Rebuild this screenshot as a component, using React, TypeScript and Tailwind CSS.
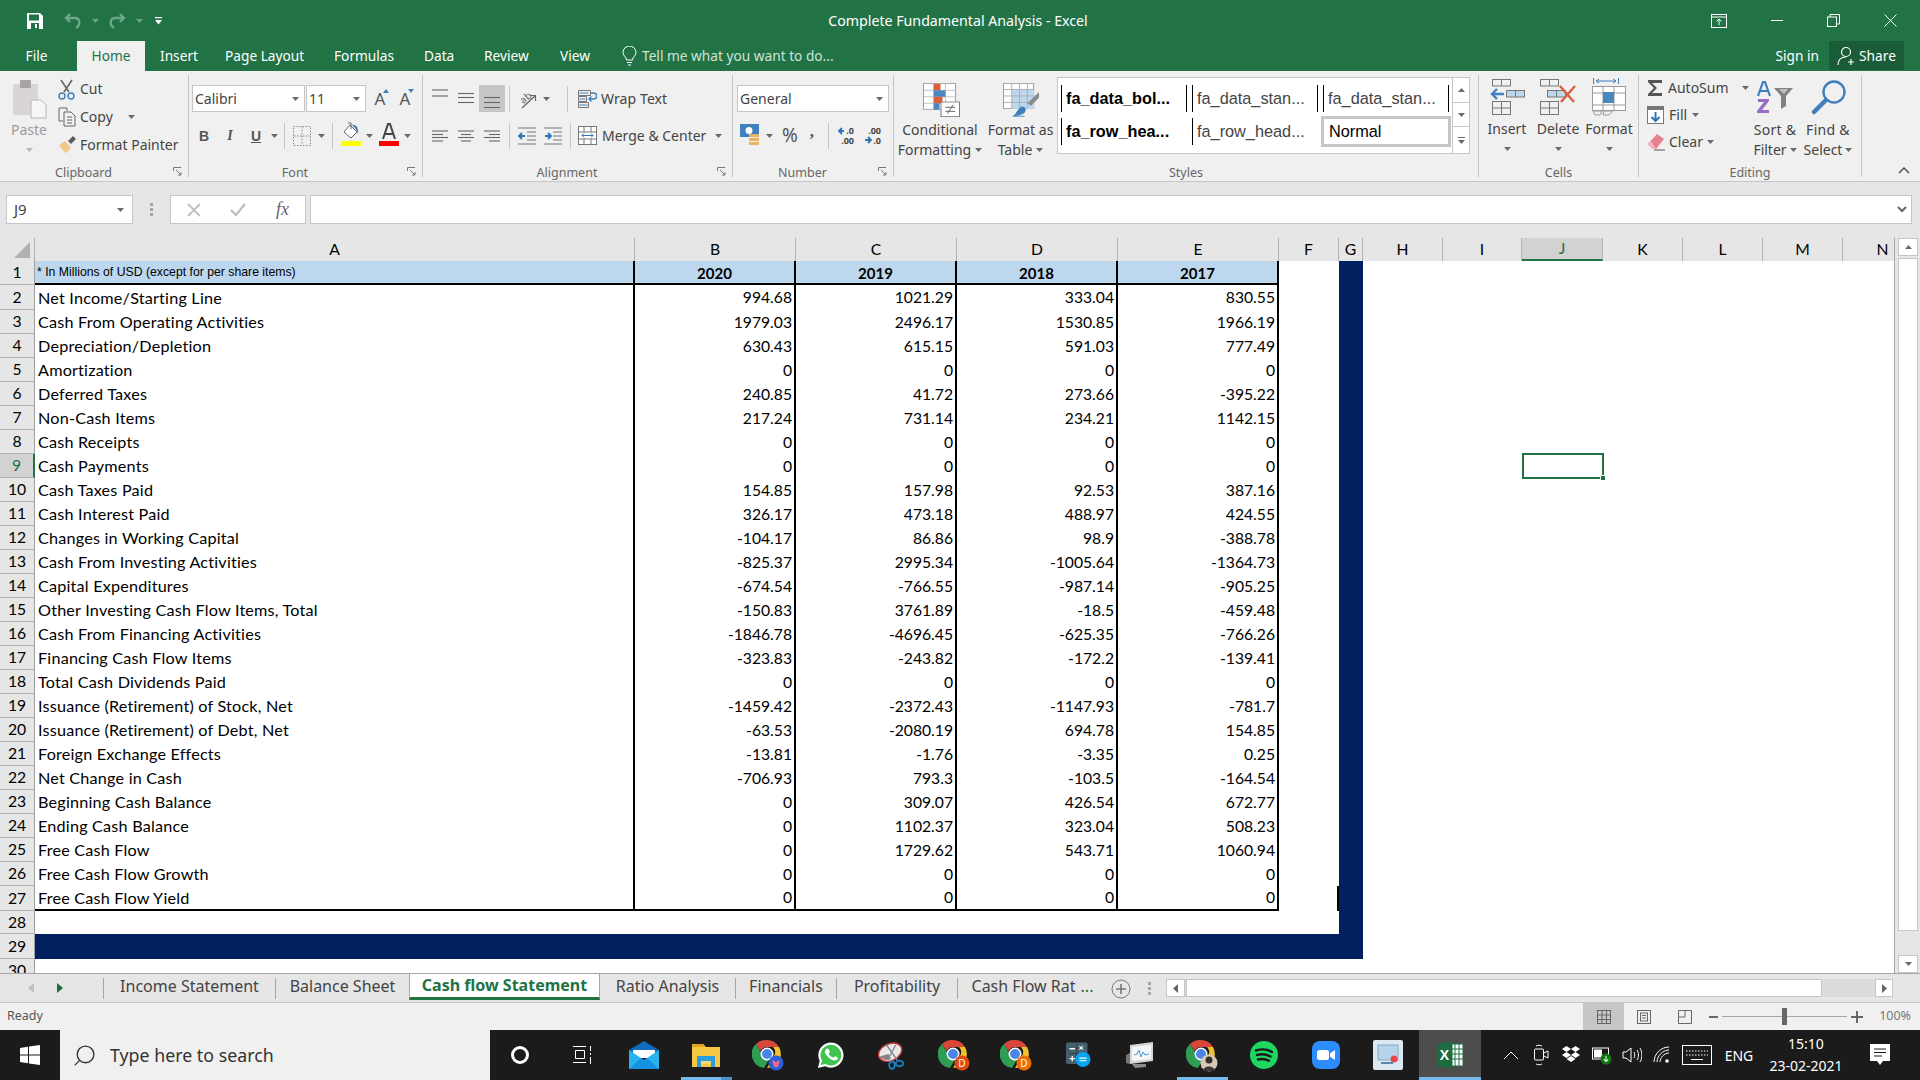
import type { ReactNode } from "react"
import { Search } from "lucide-react"

const ROWS: string[][] = [
  ["Net Income/Starting Line", "994.68", "1021.29", "333.04", "830.55"],
  ["Cash From Operating Activities", "1979.03", "2496.17", "1530.85", "1966.19"],
  ["Depreciation/Depletion", "630.43", "615.15", "591.03", "777.49"],
  ["Amortization", "0", "0", "0", "0"],
  ["Deferred Taxes", "240.85", "41.72", "273.66", "-395.22"],
  ["Non-Cash Items", "217.24", "731.14", "234.21", "1142.15"],
  ["Cash Receipts", "0", "0", "0", "0"],
  ["Cash Payments", "0", "0", "0", "0"],
  ["Cash Taxes Paid", "154.85", "157.98", "92.53", "387.16"],
  ["Cash Interest Paid", "326.17", "473.18", "488.97", "424.55"],
  ["Changes in Working Capital", "-104.17", "86.86", "98.9", "-388.78"],
  ["Cash From Investing Activities", "-825.37", "2995.34", "-1005.64", "-1364.73"],
  ["Capital Expenditures", "-674.54", "-766.55", "-987.14", "-905.25"],
  ["Other Investing Cash Flow Items, Total", "-150.83", "3761.89", "-18.5", "-459.48"],
  ["Cash From Financing Activities", "-1846.78", "-4696.45", "-625.35", "-766.26"],
  ["Financing Cash Flow Items", "-323.83", "-243.82", "-172.2", "-139.41"],
  ["Total Cash Dividends Paid", "0", "0", "0", "0"],
  ["Issuance (Retirement) of Stock, Net", "-1459.42", "-2372.43", "-1147.93", "-781.7"],
  ["Issuance (Retirement) of Debt, Net", "-63.53", "-2080.19", "694.78", "154.85"],
  ["Foreign Exchange Effects", "-13.81", "-1.76", "-3.35", "0.25"],
  ["Net Change in Cash", "-706.93", "793.3", "-103.5", "-164.54"],
  ["Beginning Cash Balance", "0", "309.07", "426.54", "672.77"],
  ["Ending Cash Balance", "0", "1102.37", "323.04", "508.23"],
  ["Free Cash Flow", "0", "1729.62", "543.71", "1060.94"],
  ["Free Cash Flow Growth", "0", "0", "0", "0"],
  ["Free Cash Flow Yield", "0", "0", "0", "0"],
]

const COLUMNS = ["A", "B", "C", "D", "E", "F", "G", "H", "I", "J", "K", "L", "M", "N"]
const GRID = "grid grid-cols-[35px_600px_161px_161px_161px_161px_60px_24px_80px_79px_81px_80px_80px_80px_80px]"

function Caret({ className = "" }: { className?: string }) {
  return (
    <svg width="7" height="4" viewBox="0 0 7 4" className={className}>
      <path d="M0 0h7L3.5 4z" fill="#6a6a6a" />
    </svg>
  )
}

function Launcher() {
  return (
    <svg width="9" height="9" viewBox="0 0 9 9" fill="none" stroke="#777">
      <path d="M.5 4V.5H8M3 3l5 5M8 5v3H5" />
    </svg>
  )
}

function Group({ label, launcher, className, children }: { label: string; launcher?: boolean; className: string; children: ReactNode }) {
  return (
    <div className={`relative flex flex-col border-r border-[#c6c6c6] ${className}`}>
      <div className="flex-1 min-h-0">{children}</div>
      <div className={`h-[14px] flex items-center justify-center translate-y-[3px] text-[12.5px] leading-none text-[#666] ${launcher ? "pr-[21px]" : ""}`}>{label}</div>
      {launcher && (
        <span className="absolute right-[6px] bottom-[1px] flex">
          <Launcher />
        </span>
      )}
    </div>
  )
}

function Sep({ className = "" }: { className?: string }) {
  return <span className={`w-px h-[26px] bg-[#c6c6c6] ${className}`} />
}

function Lines({ ys, align }: { ys: number[]; align: "l" | "c" | "r" }) {
  return (
    <svg width="18" height="20" viewBox="0 0 18 20" stroke="#666" strokeWidth="1.1">
      {ys.map((y, i) => {
        const short = i % 2 === 1 && ys.length === 4
        const x1 = short && align === "c" ? 4 : short && align === "r" ? 6 : 1
        const x2 = short && align === "c" ? 14 : short && align === "l" ? 12 : 17
        return <line key={y} x1={x1} x2={x2} y1={y} y2={y} />
      })}
    </svg>
  )
}

function ClipboardIcon() {
  return (
    <svg width="35" height="40" viewBox="0 0 35 40">
      <rect x="1" y="5" width="25" height="31" rx="1.5" fill="#d9d5d6" />
      <rect x="8" y="1" width="11" height="8" rx="1" fill="#a8a4a5" />
      <path d="M19 21h10l5 5v13H19z" fill="#f7f5f6" stroke="#bbb6b8" />
    </svg>
  )
}

function Scissors() {
  return (
    <svg width="17" height="21" viewBox="0 0 17 21" fill="none">
      <path d="M3 1l8 12M14 1L6 13" stroke="#666" strokeWidth="1.6" />
      <circle cx="4" cy="17" r="3" stroke="#3f80bd" strokeWidth="1.4" />
      <circle cx="13" cy="17" r="3" stroke="#3f80bd" strokeWidth="1.4" />
    </svg>
  )
}

function CopyIcon() {
  return (
    <svg width="18" height="20" viewBox="0 0 18 20" fill="none" stroke="#666">
      <path d="M1 1h8v3M1 1v13h4" />
      <path d="M6 5h7l4 4v10H6zM9 10h5M9 13h5M9 16h5" />
    </svg>
  )
}

function PainterIcon() {
  return (
    <svg width="18" height="18" viewBox="0 0 18 18">
      <path d="M1 9l6-4 6 7-5 5c-2-1-5-5-7-8z" fill="#f0c78c" />
      <path d="M10 5l5-5 3 3-5 5z" fill="#5d5d5d" />
    </svg>
  )
}

function BorderIcon() {
  return (
    <svg width="18" height="20" viewBox="0 0 18 20" fill="none" stroke="#888" strokeDasharray="1.5 1.5">
      <rect x=".5" y=".5" width="17" height="19" />
      <path d="M9 1v18M1 10h16" />
    </svg>
  )
}

function FillIcon() {
  return (
    <svg width="20" height="24" viewBox="0 0 20 24">
      <path d="M9 3l7 7-6 6-7-6z" fill="#fff" stroke="#666" />
      <path d="M7 1h3v6" stroke="#666" fill="none" />
      <path d="M11 3c4-1 7 3 6 9-1-4-3-6-6-9z" fill="#3f80bd" />
      <rect y="19" width="20" height="5" fill="#ffff00" />
    </svg>
  )
}

function FontColorIcon() {
  return (
    <svg width="20" height="24" viewBox="0 0 20 24">
      <path d="M4 17L9 2h2l5 15M6 12h8" fill="none" stroke="#444" strokeWidth="2" />
      <rect y="19" width="20" height="5" fill="#ff0000" />
    </svg>
  )
}

function SizeA({ up }: { up?: boolean }) {
  return (
    <span className="relative w-[12px] text-center text-[17px] text-[#555]">
      A
      <svg width="6" height="4" viewBox="0 0 6 4" className={`absolute -right-[3px] -top-[1px] ${up ? "" : "rotate-180"}`}>
        <path d="M0 4h6L3 0z" fill="#3f80bd" />
      </svg>
    </span>
  )
}

function OrientationIcon() {
  return (
    <svg width="22" height="20" viewBox="0 0 22 20" fill="none" stroke="#666" className="ml-[8px]">
      <text x="2" y="12" fontSize="10" fill="#666" stroke="none" fontFamily="Noto Sans" transform="rotate(-40 8 9)">ab</text>
      <path d="M4 19L17 7M12 6.500h5.500V12" strokeWidth="1.200" />
    </svg>
  )
}

function WrapIcon() {
  return (
    <svg width="19" height="18" viewBox="0 0 19 18" fill="none">
      <path d="M.5.5h12v5H.5zM.5 6.500h8v5h-8zM.5 12.500h10v5H.5z" stroke="#777" />
      <path d="M1.500 3h9M1.500 9h6M1.500 15h8" stroke="#3f80bd" />
      <path d="M13 3h3c3.500 0 3.500 6 0 6h-5m2.500-2.500L11 9l2.500 2.500" stroke="#3f80bd" strokeWidth="1.400" />
    </svg>
  )
}

function MergeIcon() {
  return (
    <svg width="19" height="19" viewBox="0 0 19 19" fill="none" stroke="#777">
      <rect x=".5" y=".5" width="18" height="18" fill="#fff" />
      <path d="M1 6h17M1 13h17M6 1v5M13 1v5M6 13v5M13 13v5" />
      <path d="M4 9.500h11M6 7.500l-2 2 2 2M13 7.500l2 2-2 2" stroke="#2f75b5" />
    </svg>
  )
}

function DecimalIcon({ more }: { more?: boolean }) {
  return (
    <svg width="18" height="20" viewBox="0 0 18 20" className="font-['Noto_Sans']">
      {more ? (
        <>
          <text x="17" y="8" textAnchor="end" fontSize="9" fontWeight="700" fill="#444">.00</text>
          <path d="M1 14h5M4 11l3 3-3 3" fill="none" stroke="#2f75b5" strokeWidth="1.800" />
          <text x="17" y="18" textAnchor="end" fontSize="9" fontWeight="700" fill="#444">.0</text>
        </>
      ) : (
        <>
          <path d="M7 5H2M5 2L2 5l3 3" fill="none" stroke="#2f75b5" strokeWidth="1.800" />
          <text x="17" y="8" textAnchor="end" fontSize="9" fontWeight="700" fill="#444">.0</text>
          <text x="17" y="18" textAnchor="end" fontSize="9" fontWeight="700" fill="#444">.00</text>
        </>
      )}
    </svg>
  )
}

function CondFormat() {
  return (
    <svg width="37" height="34" viewBox="0 0 38 42" preserveAspectRatio="none" className="ml-[3px]">
      <rect x=".5" y=".5" width="33" height="32" fill="#fff" stroke="#999" />
      <path d="M11 1v32M23 1v32M1 9h33M1 17h33M1 25h33" stroke="#bbb" />
      <rect x="11" y="1" width="7" height="8" fill="#d9603b" />
      <rect x="11" y="9" width="12" height="8" fill="#4a86c0" />
      <rect x="11" y="17" width="9" height="8" fill="#d9603b" />
      <rect x="11" y="25" width="6" height="8" fill="#4a86c0" />
      <rect x="18.500" y="23.500" width="19" height="18" fill="#fff" stroke="#777" />
      <path d="M23 30h10M23 35h10M31 27l-6 11" stroke="#555" fill="none" />
    </svg>
  )
}

function TableIcon() {
  return (
    <svg width="37" height="34" viewBox="0 0 38 42" preserveAspectRatio="none" className="ml-[2px]">
      <rect x=".5" y=".5" width="31" height="31" fill="#fff" stroke="#999" />
      <rect x="9" y="8" width="23" height="24" fill="#bdd7ee" />
      <path d="M9 1v31M17 1v31M25 1v31M1 8h31M1 16h31M1 24h31" stroke="#aaa" />
      <path d="M37 11l-12 14 4 3 8-10z" fill="#8a8a8a" />
      <path d="M10 41c3-1 4-8 9-12 4 0 5 3 4 6-1 4-8 6-13 6z" fill="#3f80bd" />
      <path d="M10 41h12" stroke="#3f80bd" />
    </svg>
  )
}

function InsertIcon() {
  return (
    <svg width="36" height="36" viewBox="0 0 36 36" fill="none" stroke="#777">
      <rect x="3.500" y=".5" width="18" height="6.500" />
      <path d="M12.500 1v6" />
      <rect x="17.500" y="11.500" width="18" height="6.500" fill="#bdd7ee" />
      <path d="M26.500 12v6" />
      <rect x="3.500" y="22.500" width="18" height="13" />
      <path d="M12.500 23v12M4 29h17" />
      <path d="M15 15H3m5-5l-5 5 5 5" stroke="#3f80bd" strokeWidth="2.400" />
    </svg>
  )
}

function DeleteIcon() {
  return (
    <svg width="36" height="36" viewBox="0 0 36 36" fill="none" stroke="#777">
      <rect x=".5" y=".5" width="18" height="6.500" />
      <path d="M9.500 1v6" />
      <rect x="7.500" y="11.500" width="18" height="6.500" fill="#bdd7ee" />
      <path d="M16.500 12v6" />
      <rect x=".5" y="22.500" width="18" height="13" />
      <path d="M9.500 23v12M1 29h17" />
      <path d="M20 7l14 16M35 7L21 23" stroke="#d9603b" strokeWidth="2.400" />
    </svg>
  )
}

function FormatIcon() {
  return (
    <svg width="34" height="38" viewBox="0 0 34 38" fill="none" stroke="#999">
      <path d="M1.500 0v6M26.500 0v6M4 3h20M7 1L4 3l3 2M21 1l3 2-3 2" stroke="#3f80bd" />
      <rect x=".5" y="8.500" width="33" height="24" fill="#fff" />
      <path d="M11 9v24M22 9v24M1 15h33M1 27h33" />
      <rect x="11" y="14" width="11" height="11" fill="#4a86c0" stroke="none" />
      <path d="M1 33h9l-2 4H3zM12 33h9l-4 4h-6z" />
    </svg>
  )
}

function SumIcon() {
  return (
    <svg width="16" height="16" viewBox="0 0 16 16">
      <path d="M1 0h14v3H5l5 5-5 5h10v3H1v-2l6-6-6-6z" fill="#555" />
    </svg>
  )
}

function FillDown() {
  return (
    <svg width="17" height="18" viewBox="0 0 17 18" fill="none">
      <rect x=".5" y=".5" width="16" height="17" fill="#fff" stroke="#777" />
      <rect x="1" y="1" width="15" height="3" fill="#777" />
      <path d="M8.500 6v9M4.500 11l4 4 4-4" stroke="#2f75b5" strokeWidth="2" />
    </svg>
  )
}

function Eraser() {
  return (
    <svg width="18" height="18" viewBox="0 0 18 18">
      <path d="M1 11L10 1l7 5-8 10H5z" fill="#e87f8e" />
      <path d="M1 11l4 5h4L4 8z" fill="#f3b4bd" />
      <path d="M7 17h11" stroke="#555" />
    </svg>
  )
}

function SortIcon() {
  return (
    <svg width="36" height="32" viewBox="0 0 36 32">
      <path d="M1 15L6 1h2l5 14M3 10h8" fill="none" stroke="#3f80bd" strokeWidth="2.200" />
      <path d="M1 18h11v2L5 29h7v3H0v-2l7-9H1z" fill="#9b6cc4" />
      <path d="M17 7h19l-7 8v10l-5 3V15z" fill="#808080" />
      <path d="M22 8h9l-4 5z" fill="#fff" opacity=".5" />
    </svg>
  )
}

function FindIcon() {
  return (
    <svg width="35" height="35" viewBox="0 0 35 35" fill="none" stroke="#3f80bd">
      <circle cx="23" cy="12" r="10.500" strokeWidth="2.400" />
      <path d="M14 21L3 32" strokeWidth="4.500" strokeLinecap="round" />
    </svg>
  )
}

function Chrome({ badge }: { badge?: ReactNode }) {
  return (
    <svg width="32" height="34" viewBox="0 0 32 34">
      <path d="M15 2a14 14 0 0 1 12 7H15a7 7 0 0 0-6.500 4L4 6a14 14 0 0 1 11-4z" fill="#d9473a" />
      <path d="M4 6l6.500 11a7 7 0 0 0 7 3.800L12 30A14 14 0 0 1 4 6z" fill="#2f9e54" />
      <path d="M27 9a14 14 0 0 1-12 21l7-12a7 7 0 0 0-1-9z" fill="#f3c12e" />
      <circle cx="15" cy="16" r="6.500" fill="#fff" />
      <circle cx="15" cy="16" r="5" fill="#4a86e8" />
      {badge}
    </svg>
  )
}

function DBadge({ fill }: { fill: string }) {
  return (
    <>
      <circle cx="24" cy="25" r="7.500" fill={fill} />
      <text x="24" y="29" textAnchor="middle" fontSize="10" fill="#fff">D</text>
    </>
  )
}

function SheetRow({ n, data }: { n: number; data?: string[] }) {
  const band = n === 29
  const selected = n === 9
  return (
    <>
      <div className={`flex items-center justify-center pt-px border-b border-[#b1b1b1] ${selected ? "bg-[#d2d2d2] text-[#217346] border-r-2 border-r-[#217346]" : "bg-[#e6e6e6] border-r border-r-[#9f9f9f]"}`}>{n}</div>
      {data
        ? data.map((value, i) => (
            <div key={i} className={`flex items-center pt-px border-r-2 border-r-black ${n === 27 ? "border-b-2 border-b-black" : ""} ${i === 0 ? "pl-[3px] text-[16.200px] tracking-[0.2px]" : "justify-end pr-[2px]"}`}>
              {value}
            </div>
          ))
        : COLUMNS.slice(0, 5).map((c) => <div key={c} className={band ? "bg-[#002060]" : ""} />)}
      <div className={`flex justify-end items-stretch ${band ? "bg-[#002060]" : ""}`}>
        {n === 27 && <span className="w-[2px] bg-black" />}
      </div>
      <div className={n <= 29 ? "bg-[#002060]" : ""} />
      {COLUMNS.slice(7).map((c) => (
        <div key={c} className="relative">
          {selected && c === "J" && (
            <span className="absolute -top-px -bottom-px left-0 -right-px border-2 border-[#217346]">
              <span className="absolute -right-[4px] -bottom-[4px] w-[6px] h-[6px] bg-[#217346] border border-white" />
            </span>
          )}
        </div>
      ))}
    </>
  )
}

function SheetTab({ name, className }: { name: ReactNode; className: string }) {
  return <div className={`flex items-center justify-center h-[21px] mt-[4px] pb-[6px] border-l border-[#a6a6a6] text-[16px] text-[#444] whitespace-nowrap ${className}`}>{name}</div>
}

function TaskSlot({ children, underline, active }: { children: ReactNode; underline?: boolean; active?: boolean }) {
  return (
    <div className={`relative w-[62px] flex items-center justify-center ${active ? "bg-[#4d4d4d]" : ""}`}>
      {children}
      {underline && <span className="absolute bottom-0 left-[6px] right-[5px] h-[3px] bg-[#76b9ed]" />}
      {active && <span className="absolute bottom-0 inset-x-0 h-[3px] bg-[#76b9ed]" />}
    </div>
  )
}

function Tray({ w, children }: { w: string; children: ReactNode }) {
  return <div className={`${w} flex items-center justify-center`}>{children}</div>
}

export default function App() {
  return (
    <div className="w-[1920px] h-[1080px] flex flex-col overflow-hidden font-['Noto_Sans',sans-serif] text-[14px] text-[#444] bg-[#f0f0f0]">
      {/* Title bar */}
      <div className="h-[41px] shrink-0 bg-[#217346] flex items-center text-white">
        <div className="w-[640px] flex items-center">
          <svg width="16" height="16" viewBox="0 0 16 16" className="ml-[27px]">
            <path d="M0 0h13l3 3v13H0z" fill="#fff" />
            <rect x="2" y="1.500" width="10" height="6" fill="#217346" />
            <rect x="4" y="10" width="8" height="6" fill="#217346" />
            <rect x="8" y="11" width="2" height="4" fill="#fff" />
          </svg>
          <svg width="20" height="18" viewBox="0 0 20 18" fill="none" stroke="#6fa588" strokeWidth="2.400" className="ml-[20px]">
            <path d="M7 2L3 6l4 4M3 6h9c5 0 6 7 1 10" />
          </svg>
          <svg width="7" height="4" className="ml-[9px]"><path d="M0 0h7L3.500 4z" fill="#6fa588" /></svg>
          <svg width="20" height="18" viewBox="0 0 20 18" fill="none" stroke="#6fa588" strokeWidth="2.400" className="ml-[8px]">
            <path d="M13 2l4 4-4 4M17 6H8c-5 0-6 7-1 10" />
          </svg>
          <svg width="7" height="4" className="ml-[9px]"><path d="M0 0h7L3.500 4z" fill="#6fa588" /></svg>
          <svg width="7" height="8" viewBox="0 0 7 8" className="ml-[12px]">
            <path d="M0 0h7v1.200H0zM0 3h7L3.500 7.500z" fill="#fff" />
          </svg>
        </div>
        <div className="w-[636px] text-center text-[14.200px]">Complete Fundamental Analysis - Excel</div>
        <div className="flex-1 flex items-center">
          <svg width="16" height="14" viewBox="0 0 16 14" fill="none" stroke="#fff" className="ml-[435px]">
            <rect x=".5" y=".5" width="15" height="13" />
            <path d="M1 3h14M8 11V5M5.500 7.500L8 5l2.500 2.500" />
          </svg>
          <svg width="12" height="2" className="ml-[44px]"><rect width="12" height="1" fill="#fff" /></svg>
          <svg width="13" height="13" viewBox="0 0 13 13" fill="none" stroke="#fff" className="ml-[44px]">
            <rect x=".5" y="3" width="9" height="9.500" />
            <path d="M3 3V.5h9.500V10H10" />
          </svg>
          <svg width="13" height="13" viewBox="0 0 13 13" stroke="#fff" className="ml-[44px]">
            <path d="M.5.5l12 12M12.500.5l-12 12" />
          </svg>
        </div>
      </div>

      {/* Ribbon tabs */}
      <div className="h-[30px] shrink-0 bg-[#217346] flex text-white text-[13.700px] leading-none whitespace-nowrap">
        <div className="w-[73px] flex items-center justify-center">File</div>
        <div className="w-[68px] ml-[4px] flex items-center justify-center bg-[#f0f0f0] text-[#217346]">Home</div>
        <div className="w-[36px] ml-[15px] flex items-center">Insert</div>
        <div className="w-[80px] ml-[29px] flex items-center">Page Layout</div>
        <div className="w-[60px] ml-[29px] flex items-center">Formulas</div>
        <div className="w-[30px] ml-[30px] flex items-center">Data</div>
        <div className="w-[47px] ml-[30px] flex items-center">Review</div>
        <div className="w-[32px] ml-[29px] flex items-center">View</div>
        <svg width="15" height="20" viewBox="0 0 15 20" fill="none" stroke="#fff" className="ml-[30px] self-center">
          <path d="M4.500 14c0-3-3.500-4-3.500-7.500a6.500 6.500 0 0 1 13 0C14 10 10.500 11 10.500 14zM5 16.500h5M6 19h3" />
        </svg>
        <div className="ml-[5px] flex items-center text-[#cfe3d7]">Tell me what you want to do...</div>
        <div className="ml-auto flex items-center">Sign in</div>
        <div className="ml-[10px] mr-[16px] w-[75px] h-[29px] bg-[#1a5c38] flex items-center justify-center gap-[2px]">
          <svg width="20" height="20" viewBox="0 0 20 20" fill="none" stroke="#fff" strokeWidth="1.200">
            <circle cx="9" cy="6" r="4.500" />
            <path d="M1 19c0-5 3-8 8-8M14 13v6M11 16h6" />
          </svg>
          Share
        </div>
      </div>

      {/* Ribbon */}
      <div className="h-[111px] shrink-0 flex pt-[4px] pb-[4px] border-b border-[#c6c6c6] leading-none">
        <Group label="Clipboard" launcher className="w-[189px]">
          <div className="flex">
            <div className="w-[58px] flex flex-col items-center text-[#9d9d9d]">
              <span className="mt-[4px] flex"><ClipboardIcon /></span>
              <span className="mt-[4px]">Paste</span>
              <Caret className="mt-[11px] opacity-40" />
            </div>
            <div className="flex flex-col">
              <div className="h-7 flex items-center gap-[5px]"><Scissors /><span>Cut</span></div>
              <div className="h-7 flex items-center gap-[4px]"><CopyIcon /><span>Copy</span><Caret className="ml-[11px]" /></div>
              <div className="h-7 flex items-center gap-[4px]"><PainterIcon /><span>Format Painter</span></div>
            </div>
          </div>
        </Group>

        <Group label="Font" launcher className="w-[234px]">
          <div className="flex items-center mt-[10px] h-[27px] ml-[3px]">
            <div className="w-[113px] h-full bg-white border border-[#c6c6c6] flex items-center justify-between pl-[2px] pr-[5px]">Calibri<Caret /></div>
            <div className="w-[60px] h-full ml-[1px] bg-white border border-[#c6c6c6] flex items-center justify-between pl-[2px] pr-[5px]">11<Caret /></div>
            <span className="ml-[8px] flex"><SizeA up /></span>
            <span className="ml-[13px] flex"><SizeA /></span>
          </div>
          <div className="flex items-center mt-[10px] h-[27px] ml-[2px]">
            <span className="w-[26px] text-center font-bold text-[#555] font-['Liberation_Sans']">B</span>
            <span className="w-[26px] text-center font-bold italic text-[#555] font-['Liberation_Serif']">I</span>
            <span className="w-[26px] text-center font-bold underline text-[#555] font-['Liberation_Sans']">U</span>
            <Caret className="ml-[2px]" />
            <Sep className="ml-[6px]" />
            <span className="ml-[8px] flex"><BorderIcon /></span>
            <Caret className="ml-[7px]" />
            <Sep className="ml-[7px]" />
            <span className="ml-[8px] -mt-[3px] flex"><FillIcon /></span>
            <Caret className="ml-[5px]" />
            <span className="ml-[6px] -mt-[3px] flex"><FontColorIcon /></span>
            <Caret className="ml-[5px]" />
          </div>
        </Group>

        <Group label="Alignment" launcher className="w-[310px]">
          <div className="flex items-center mt-[10px] h-[27px] ml-[4px]">
            <span className="w-[26px] flex justify-center"><Lines ys={[1, 7]} align="l" /></span>
            <span className="w-[26px] flex justify-center"><Lines ys={[4.5, 8.5, 13.5]} align="l" /></span>
            <span className="w-[26px] h-full bg-[#c6c6c6] flex items-center justify-center"><Lines ys={[8.5, 13.5, 18.5]} align="l" /></span>
            <Sep className="ml-[4px]" />
            <OrientationIcon />
            <Caret className="ml-[3px]" />
            <Sep className="ml-[17px]" />
            <span className="ml-[10px] flex"><WrapIcon /></span>
            <span className="ml-[4px] tracking-[0.1px]">Wrap Text</span>
          </div>
          <div className="flex items-center mt-[10px] h-[27px] ml-[4px]">
            <span className="w-[26px] flex justify-center"><Lines ys={[5, 8.5, 11.5, 15]} align="l" /></span>
            <span className="w-[26px] flex justify-center"><Lines ys={[5, 8.5, 11.5, 15]} align="c" /></span>
            <span className="w-[26px] flex justify-center"><Lines ys={[5, 8.5, 11.5, 15]} align="r" /></span>
            <Sep className="ml-[4px]" />
            <svg width="18" height="20" viewBox="0 0 18 20" fill="none" stroke="#777" className="ml-[8px]">
              <path d="M0 2h18M9 6h9M9 10h9M9 14h9M0 18h18" />
              <path d="M7 10H1m3-3l-3 3 3 3" stroke="#2f75b5" strokeWidth="1.800" />
            </svg>
            <svg width="18" height="20" viewBox="0 0 18 20" fill="none" stroke="#777" className="ml-[8px]">
              <path d="M0 2h18M9 6h9M9 10h9M9 14h9M0 18h18" />
              <path d="M1 10h6M4 7l3 3-3 3" stroke="#2f75b5" strokeWidth="1.800" />
            </svg>
            <Sep className="ml-[8px]" />
            <span className="ml-[7px] flex"><MergeIcon /></span>
            <span className="ml-[5px]">Merge &amp; Center</span>
            <Caret className="ml-[9px]" />
          </div>
        </Group>

        <Group label="Number" launcher className="w-[161px]">
          <div className="flex items-center mt-[10px] h-[27px] ml-[4px]">
            <div className="w-[152px] h-full bg-white border border-[#c6c6c6] flex items-center justify-between pl-[2px] pr-[5px]">General<Caret /></div>
          </div>
          <div className="flex items-center mt-[10px] h-[27px] ml-[7px]">
            <svg width="20" height="24" viewBox="0 0 20 24">
              <rect width="19" height="13" fill="#3f80bd" />
              <circle cx="9" cy="6.500" r="3.500" fill="#fff" />
              <rect x="9" y="10" width="10" height="3" fill="#e9b35f" />
              <rect x="9" y="14" width="10" height="3" fill="#e9b35f" />
              <rect x="9" y="18" width="10" height="3" fill="#e9b35f" />
            </svg>
            <Caret className="ml-[6px]" />
            <span className="ml-[9px] text-[19px] text-[#555]">%</span>
            <span className="ml-[12px] -mt-[8px] font-bold text-[#555] text-[17px] font-['Liberation_Serif']">,</span>
            <Sep className="ml-[14px]" />
            <span className="ml-[8px] flex"><DecimalIcon /></span>
            <span className="ml-[9px] flex"><DecimalIcon more /></span>
          </div>
        </Group>

        <Group label="Styles" className="w-[585px]">
          <div className="flex">
            <div className="w-[92px] flex flex-col items-center mt-[8px]">
              <CondFormat />
              <span className="mt-[6px]">Conditional</span>
              <span className="mt-[6px] flex items-center gap-[4px]">Formatting<Caret /></span>
            </div>
            <div className="w-[69px] flex flex-col items-center mt-[8px]">
              <TableIcon />
              <span className="mt-[6px]">Format as</span>
              <span className="mt-[6px] flex items-center gap-[4px]">Table<Caret /></span>
            </div>
            <div className="ml-[2px] mt-[2px] w-[413px] h-[77px] bg-white border border-[#c6c6c6] flex font-['Liberation_Sans'] text-black text-[16.300px] whitespace-nowrap">
              <div className="w-[394px] grid grid-cols-[131px_131px_132px] grid-rows-[27px_27px] gap-y-[6px] pt-[7px] pl-[3px]">
                <div className="flex items-center"><span className="h-[27px] w-[126px] flex items-center border-x border-black pl-[4px] font-bold">fa_data_bol...</span></div>
                <div className="flex items-center"><span className="h-[27px] w-[126px] flex items-center border-x border-black pl-[4px] text-[#444]">fa_data_stan...</span></div>
                <div className="flex items-center"><span className="h-[27px] w-[126px] flex items-center border-x border-black pl-[4px] text-[#444]">fa_data_stan...</span></div>
                <div className="flex items-center"><span className="h-[27px] w-[126px] flex items-center border-l border-black pl-[4px] font-bold">fa_row_hea...</span></div>
                <div className="flex items-center"><span className="h-[27px] w-[126px] flex items-center border-l border-black pl-[4px] text-[#444]">fa_row_head...</span></div>
                <div className="flex items-center -ml-[2px]"><span className="h-[31px] w-[130px] flex items-center border-[3px] border-[#c6c6c6] pl-[5px]">Normal</span></div>
              </div>
              <div className="w-[18px] ml-auto flex flex-col border-l border-[#c6c6c6]">
                <span className="h-[25px] flex items-center justify-center border-b border-[#c6c6c6]"><Caret className="rotate-180" /></span>
                <span className="h-[24px] flex items-center justify-center border-b border-[#c6c6c6]"><Caret /></span>
                <span className="flex-1 flex flex-col gap-[2px] items-center justify-center">
                  <span className="w-[7px] h-px bg-[#6a6a6a]" />
                  <Caret />
                </span>
              </div>
            </div>
          </div>
        </Group>

        <Group label="Cells" className="w-[160px]">
          <div className="flex pl-[3px] mt-[3px]">
            {[
              { name: "Insert", icon: <InsertIcon />, w: "w-[50px]" },
              { name: "Delete", icon: <DeleteIcon />, w: "w-[52px]" },
              { name: "Format", icon: <FormatIcon />, w: "w-[50px]" },
            ].map((c) => (
              <div key={c.name} className={`${c.w} flex flex-col items-center`}>
                <span className="h-[38px] flex items-center">{c.icon}</span>
                <span className="mt-[6px]">{c.name}</span>
                <Caret className="mt-[11px]" />
              </div>
            ))}
          </div>
        </Group>

        <Group label="Editing" className="w-[223px]">
          <div className="flex">
            <div className="w-[110px] pl-[8px] -mt-[1px] flex flex-col">
              <div className="h-[27px] flex items-center gap-[5px]"><SumIcon /><span>AutoSum</span><Caret className="ml-[8px]" /></div>
              <div className="h-[27px] flex items-center gap-[5px]"><FillDown /><span>Fill</span><Caret /></div>
              <div className="h-[27px] flex items-center gap-[4px]"><Eraser /><span>Clear</span><Caret /></div>
            </div>
            <div className="w-[52px] flex flex-col items-center mt-[6px]">
              <SortIcon />
              <span className="mt-[10px] tracking-[0.3px]">Sort &amp;</span>
              <span className="mt-[6px] flex items-center gap-[3px]">Filter<Caret /></span>
            </div>
            <div className="w-[54px] flex flex-col items-center mt-[5px]">
              <FindIcon />
              <span className="mt-[8px] tracking-[0.3px]">Find &amp;</span>
              <span className="mt-[6px] flex items-center gap-[3px]">Select<Caret /></span>
            </div>
          </div>
        </Group>

        <div className="flex-1 flex items-end justify-end pr-[10px] pb-[3px]">
          <svg width="12" height="7" viewBox="0 0 12 7" fill="none" stroke="#555" strokeWidth="1.500"><path d="M1 6l5-5 5 5" /></svg>
        </div>
      </div>

      {/* Formula bar */}
      <div className="h-[56px] shrink-0 bg-[#e6e6e6] flex pt-[13px] pb-[14px] pl-[6px] text-[15px]">
        <div className="w-[127px] bg-white border border-[#c6c6c6] flex items-center justify-between pl-[7px] pr-[8px]">J9<Caret /></div>
        <div className="w-[37px] flex flex-col items-center justify-center gap-[2px]">
          <span className="w-[3px] h-[3px] bg-[#a6a6a6]" />
          <span className="w-[3px] h-[3px] bg-[#a6a6a6]" />
          <span className="w-[3px] h-[3px] bg-[#a6a6a6]" />
        </div>
        <div className="w-[136px] bg-white border border-[#c6c6c6] flex items-center">
          <svg width="14" height="14" viewBox="0 0 14 14" stroke="#c0c0c0" strokeWidth="1.800" className="ml-[16px]"><path d="M1 1l12 12M13 1L1 13" /></svg>
          <svg width="16" height="14" viewBox="0 0 16 14" fill="none" stroke="#c0c0c0" strokeWidth="2.400" className="ml-[29px]"><path d="M1 7l5 5L15 1" /></svg>
          <span className="ml-[30px] italic font-['Liberation_Serif'] text-[18px] text-[#666]">fx</span>
        </div>
        <div className="w-[1602px] ml-[4px] bg-white border border-[#c6c6c6] flex items-center justify-end pr-[4px]">
          <svg width="10" height="7" viewBox="0 0 10 7" fill="none" stroke="#666" strokeWidth="2"><path d="M1 1l4 4 4-4" /></svg>
        </div>
      </div>

      {/* Sheet */}
      <div className="h-[736px] shrink-0 flex overflow-hidden bg-white">
        <div className={`w-[1894px] h-[736px] overflow-hidden border-b border-[#a6a6a6] font-['Lato',sans-serif] text-[15.700px] leading-none text-black content-start ${GRID} grid-rows-[23px_24px_25px_repeat(24,24px)_25px_23px_25px_24px]`}>
          <div className="bg-[#e6e6e6] border-r border-[#b1b1b1] flex items-end justify-end pr-[4px] pb-[3px]">
            <svg width="16" height="16"><path d="M16 0v16H0z" fill="#b1b1b1" /></svg>
          </div>
          {COLUMNS.map((c) => (
            <div key={c} className={`flex items-center justify-center pt-px border-r border-[#b1b1b1] ${c === "J" ? "bg-[#d2d2d2] text-[#217346] border-b-2 border-b-[#217346]" : "bg-[#e6e6e6]"}`}>{c}</div>
          ))}

          <div className="bg-[#e6e6e6] border-r border-r-[#9f9f9f] border-b border-[#b1b1b1] flex items-center justify-center">1</div>
          <div className="bg-[#bdd7ee] border-r-2 border-b-2 border-black flex items-center pl-[2px] font-['Liberation_Sans'] text-[12.250px]">* In Millions of USD (except for per share items)</div>
          {["2020", "2019", "2018", "2017"].map((y) => (
            <div key={y} className="bg-[#bdd7ee] border-r-2 border-b-2 border-black flex items-center justify-center pt-[2px] font-bold text-[15px]">{y}</div>
          ))}
          <div />
          <div className="bg-[#002060]" />
          <div className="col-span-7" />

          {ROWS.map((r, i) => (
            <SheetRow key={r[0]} n={i + 2} data={r} />
          ))}
          <SheetRow n={28} />
          <SheetRow n={29} />
          <SheetRow n={30} />
        </div>
        <div className="flex-1 bg-[#e6e6e6] border-l border-b border-[#a6a6a6] flex flex-col pl-[3px] pr-[2px]">
          <div className="h-[18px] bg-white border border-[#c6c6c6] flex items-center justify-center"><Caret className="rotate-180" /></div>
          <div className="h-[673px] mt-[2px] bg-white border border-[#c6c6c6]" />
          <div className="mt-auto h-[18px] bg-white border border-[#c6c6c6] flex items-center justify-center"><Caret /></div>
        </div>
      </div>

      {/* Sheet tabs */}
      <div className="h-[29px] shrink-0 bg-[#e6e6e6] border-b border-[#c6c6c6] flex">
        <div className="w-[103px] flex items-center">
          <svg width="6" height="10" className="ml-[28px]"><path d="M6 0v10L0 5z" fill="#c0c0c0" /></svg>
          <svg width="6" height="10" className="ml-[23px]"><path d="M0 0v10l6-5z" fill="#1e6b3f" /></svg>
        </div>
        <SheetTab name="Income Statement" className="w-[172px]" />
        <SheetTab name="Balance Sheet" className="w-[134px]" />
        <div className="w-[191px] h-[26px] pb-px bg-white border-x border-[#a6a6a6] border-b-[3px] border-b-[#217346] flex items-center justify-center font-bold text-[16px] text-[#217346] whitespace-nowrap">Cash flow Statement</div>
        <SheetTab name="Ratio Analysis" className="w-[135px] border-l-0" />
        <SheetTab name="Financials" className="w-[101px]" />
        <SheetTab name="Profitability" className="w-[121px]" />
        <SheetTab name={<>Cash Flow Rat <span className="text-[#1e6b3f] ml-[5px]">...</span></>} className="w-[150px]" />
        <svg width="20" height="20" viewBox="0 0 20 20" fill="none" stroke="#777" className="ml-[4px] mt-[5px]">
          <circle cx="10" cy="10" r="9" />
          <path d="M10 5v10M5 10h10" strokeWidth="1.600" />
        </svg>
        <div className="w-[3px] ml-[17px] flex flex-col items-center justify-center gap-[2px]">
          <span className="w-[3px] h-[3px] bg-[#a6a6a6]" />
          <span className="w-[3px] h-[3px] bg-[#a6a6a6]" />
          <span className="w-[3px] h-[3px] bg-[#a6a6a6]" />
        </div>
        <div className="ml-[15px] mt-[5px] h-[18px] w-[727px] flex bg-[#dcdcdc]">
          <div className="w-[19px] bg-white border border-[#c6c6c6] flex items-center justify-center">
            <svg width="5" height="9"><path d="M5 0v9L0 4.500z" fill="#666" /></svg>
          </div>
          <div className="w-[636px] ml-px bg-white border border-[#c6c6c6]" />
          <div className="w-[18px] ml-auto bg-white border border-[#c6c6c6] flex items-center justify-center">
            <svg width="5" height="9"><path d="M0 0v9l5-4.500z" fill="#666" /></svg>
          </div>
        </div>
      </div>

      {/* Status bar */}
      <div className="h-[27px] shrink-0 bg-[#f0f0f0] flex items-center text-[12.500px] text-[#555]">
        <span className="ml-[7px]">Ready</span>
        <div className="ml-auto h-full w-[41px] bg-[#c6c6c6] flex items-center justify-center">
          <svg width="14" height="14" viewBox="0 0 14 14" fill="none" stroke="#666"><rect x=".5" y=".5" width="13" height="13" /><path d="M5 1v13M9.500 1v13M1 5h13M1 9.500h13" /></svg>
        </div>
        <svg width="14" height="14" viewBox="0 0 14 14" fill="none" stroke="#666" className="ml-[13px]"><rect x=".5" y=".5" width="13" height="13" /><rect x="3.500" y="3" width="7" height="8" /><path d="M5 5.500h4M5 8h4" /></svg>
        <svg width="14" height="14" viewBox="0 0 14 14" fill="none" stroke="#666" className="ml-[27px]"><path d="M.5 .5h13v13H.5zM7 1v6H1" /></svg>
        <span className="ml-[17px] w-[9px] h-[2px] bg-[#666]" />
        <div className="relative ml-[4px] w-[125px] h-px bg-[#a6a6a6]">
          <span className="absolute left-[60px] -top-[8px] w-[5px] h-[17px] bg-[#666]" />
        </div>
        <svg width="12" height="12" viewBox="0 0 12 12" stroke="#666" strokeWidth="2" className="ml-[4px]"><path d="M6 0v12M0 6h12" /></svg>
        <span className="ml-[16px] mr-[9px] text-[#777]">100%</span>
      </div>

      {/* Taskbar */}
      <div className="h-[50px] shrink-0 bg-[#1b1b1b] flex items-stretch text-white">
        <div className="w-[60px] flex items-center justify-center">
          <svg width="20" height="20" viewBox="0 0 20 20" fill="#fff"><path d="M0 3l8-1.200V9.500H0zM9 1.600L20 0v9.500H9zM0 10.500h8v7.800L0 17zM9 10.500h11V20L9 18.400z" /></svg>
        </div>
        <div className="w-[430px] bg-[#f0f0f0] flex items-center text-[#333] text-[17.800px]">
          <Search size={25} strokeWidth={1.300} className="ml-[12px] -scale-x-100" />
          <span className="ml-[13px]">Type here to search</span>
        </div>
        <div className="w-[60px] flex items-center justify-center">
          <span className="w-[18px] h-[18px] rounded-full border-[3px] border-white" />
        </div>
        <div className="w-[63px] flex items-center justify-center">
          <svg width="20" height="18" viewBox="0 0 20 18" fill="none" stroke="#fff"><path d="M1 .5h13M3.500 4.500h9v8h-9zM1 16.500h13M18.500 0v5M18.500 7v2M18.500 11v7" /></svg>
        </div>

        <TaskSlot>
          <svg width="30" height="28" viewBox="0 0 30 28">
            <path d="M0 9L15 0l15 9v4H0z" fill="#0f6cbd" />
            <path d="M4 9h22v8H4z" fill="#fff" />
            <path d="M0 9l15 10L30 9v19H0z" fill="#27b3ee" />
            <path d="M0 28l12-11 3 2 3-2 12 11z" fill="#1593e0" />
          </svg>
        </TaskSlot>
        <div className="relative w-[62px] flex items-center justify-center">
          <svg width="28" height="24" viewBox="0 0 28 24"><path d="M0 1h11l3 3h14v20H0z" fill="#f6c944" /><path d="M0 4h14l-3-3H0z" fill="#e2a522" /><path d="M5 13h18v11h-4v-6H9v6H5z" fill="#2d9cdb" /><rect x="9" y="18" width="10" height="3" fill="#f6d878" /></svg>
          <span className="absolute bottom-0 left-[6px] w-[40px] h-[3px] bg-[#76b9ed]" />
          <span className="absolute bottom-0 left-[46px] w-[11px] h-[3px] bg-[#4f90c3]" />
        </div>
        <TaskSlot><Chrome badge={<><circle cx="24" cy="25" r="7.500" fill="#2a5fd8" /><path d="M20 22l4 2 4-2-2 7h-4z" fill="#f06a8a" /></>} /></TaskSlot>
        <TaskSlot>
          <svg width="27" height="27" viewBox="0 0 30 30">
            <path d="M1 29l2-8A14 14 0 1 1 9 27z" fill="#fff" />
            <path d="M4 25.500l1.500-5A11.500 11.500 0 1 1 9.500 24.500z" fill="#3fc351" />
            <path d="M10 8c2-2 3 0 4 2s-1 2-1 3 3 4 5 4 1-2 3-1 3 2 2 3-4 3-8 0-7-7-6-9 1-2 1-2z" fill="#fff" />
          </svg>
        </TaskSlot>
        <TaskSlot>
          <svg width="28" height="30" viewBox="0 0 30 32" fill="none">
            <ellipse cx="13" cy="13" rx="13" ry="9" transform="rotate(-25 13 13)" fill="#e8e8e8" stroke="#c23a3a" strokeWidth="1.500" />
            <path d="M1 18c6 4 9 4 13 2l-3-5z" fill="#8c7f7f" />
            <path d="M9 5l12 17M19 5l-8 15" stroke="#888" strokeWidth="1.500" />
            <ellipse cx="23" cy="25" rx="4" ry="3" stroke="#1581c4" strokeWidth="2" />
            <ellipse cx="15" cy="27" rx="3" ry="4" stroke="#1581c4" strokeWidth="2" />
          </svg>
        </TaskSlot>
        <TaskSlot><Chrome badge={<DBadge fill="#e24a12" />} /></TaskSlot>
        <TaskSlot><Chrome badge={<DBadge fill="#ef6c00" />} /></TaskSlot>
        <TaskSlot>
          <svg width="25" height="26" viewBox="0 0 28 28">
            <rect width="24" height="24" rx="2" fill="#47606e" />
            <path d="M3 12.500h18M12 1v23" stroke="#1b1b1b" strokeWidth=".5" />
            <path d="M4 7h6M4 18h6M7 15v6" stroke="#fff" strokeWidth="1.500" />
            <path d="M15 4l4 4M19 4l-4 4" stroke="#fff" strokeWidth="1.200" />
            <circle cx="19" cy="19" r="8.500" fill="#0ba4f0" />
            <path d="M15 17.500h8M15 20.500h8" stroke="#fff" strokeWidth="1.200" />
          </svg>
        </TaskSlot>
        <TaskSlot>
          <svg width="28" height="26" viewBox="0 0 28 26">
            <path d="M4 3l23-3v19L4 22z" fill="#d6d6d6" />
            <path d="M6 5l19-2v14L6 19z" fill="#f4f6f8" />
            <path d="M8 13l3-1 2-4 2 7 2-5 2 3 4-1" fill="none" stroke="#4a9ad4" />
            <path d="M0 13l4-2v11l-4-1z" fill="#777" />
            <path d="M6 22h14v3l-11 1z" fill="#8a8a8a" />
          </svg>
        </TaskSlot>
        <TaskSlot underline>
          <Chrome badge={<><circle cx="23" cy="25" r="8.500" fill="#d8c7b4" /><circle cx="23" cy="22" r="3.500" fill="#33302c" /><path d="M17 33c0-6 12-6 12 0z" fill="#3a3a3a" /></>} />
        </TaskSlot>
        <TaskSlot>
          <svg width="28" height="28" viewBox="0 0 28 28" fill="none">
            <circle cx="14" cy="14" r="14" fill="#1ed760" />
            <path d="M6 9.500c6-2 11-1.500 16 1.500M7 14c5-1.500 9-1 13.500 1.500M8 18.500c4-1 7.500-.7 11 1.200" stroke="#1b1b1b" strokeWidth="2.400" strokeLinecap="round" />
          </svg>
        </TaskSlot>
        <TaskSlot>
          <svg width="28" height="28" viewBox="0 0 28 28">
            <rect width="28" height="28" rx="8" fill="#2d8cff" />
            <rect x="5" y="9" width="12" height="10" rx="2.500" fill="#fff" />
            <path d="M18 12.500l5-3.500v10l-5-3.500z" fill="#fff" />
          </svg>
        </TaskSlot>
        <TaskSlot>
          <svg width="30" height="30" viewBox="0 0 30 30">
            <rect width="30" height="30" rx="2" fill="#dbe8f2" />
            <rect x="5" y="5" width="20" height="15" fill="#b7d3ea" stroke="#8aa8c2" />
            <rect x="8" y="22" width="12" height="2" fill="#5b87ad" />
            <circle cx="21" cy="19" r="3.500" fill="#e8474c" />
          </svg>
        </TaskSlot>
        <TaskSlot active>
          <svg width="27" height="28" viewBox="0 0 27 28">
            <path d="M0 3l15-3v28L0 25z" fill="#1e6b3f" />
            <rect x="15" y="3" width="11" height="22" fill="#fff" stroke="#1e7145" />
            <path d="M18 3v22M22 3v22M15 8h11M15 13h11M15 18h11" stroke="#1e7145" />
            <text x="7.500" y="19" textAnchor="middle" fontSize="14" fontWeight="700" fill="#fff" fontFamily="Liberation Sans">X</text>
          </svg>
        </TaskSlot>

        <div className="w-[15px]" />
        <Tray w="w-[30px]"><svg width="16" height="9" viewBox="0 0 16 9" fill="none" stroke="#fff"><path d="M1 8l7-7 7 7" /></svg></Tray>
        <Tray w="w-[30px]">
          <svg width="15" height="22" viewBox="0 0 15 22" fill="none" stroke="#fff"><rect x=".5" y="5" width="9" height="11" rx="1" /><path d="M10 9l4-2v7l-4-2M2 2c2-1 4-1 6 0M2 20c2 1 4 1 6 0" /></svg>
        </Tray>
        <Tray w="w-[30px]">
          <svg width="18" height="18" viewBox="0 0 18 18" fill="#fff"><path d="M4.500 0L9 3 4.500 6 0 3zM13.500 0L18 3l-4.500 3L9 3zM4.500 6L9 9l-4.500 3L0 9zM13.500 6L18 9l-4.500 3L9 9zM4.500 13L9 10l4.500 3L9 16z" /></svg>
        </Tray>
        <Tray w="w-[31px]">
          <svg width="20" height="20" viewBox="0 0 20 20"><rect x=".5" y="3" width="16" height="11" fill="none" stroke="#fff" /><rect x="2" y="4.500" width="8" height="8" fill="#fff" /><circle cx="14" cy="14" r="5.500" fill="#0f7b0f" /><path d="M14 11v6M12 14a2 2 0 0 0 4 0" stroke="#fff" fill="none" /></svg>
        </Tray>
        <Tray w="w-[29px]">
          <svg width="20" height="18" viewBox="0 0 20 18" fill="none" stroke="#fff"><path d="M1 6h3l5-4v14l-5-4H1zM12 6c1 2 1 4 0 6M15 4c2 3 2 7 0 10M18 2c2.500 4 2.500 10 0 14" /></svg>
        </Tray>
        <Tray w="w-[31px]">
          <svg width="18" height="18" viewBox="0 0 18 18" fill="none" stroke="#fff"><path d="M1 16C1 8 8 1 16 1M4 16c0-6 6-12 12-12M7 16c0-4 4-9 9-9" /><circle cx="14" cy="15" r="1.800" fill="#fff" stroke="none" /></svg>
        </Tray>
        <Tray w="w-[40px]">
          <svg width="30" height="20" viewBox="0 0 30 20" fill="none" stroke="#fff"><rect x=".5" y=".5" width="29" height="19" /><path d="M4 6h22M4 10h22" strokeDasharray="1.500 1.500" /><path d="M9 14.500h12" /></svg>
        </Tray>
        <Tray w="w-[44px]"><span className="text-[14px]">ENG</span></Tray>
        <div className="w-[90px] flex flex-col items-center justify-center gap-[8px] text-[14px] leading-none">
          <span>15:10</span>
          <span>23-02-2021</span>
        </div>
        <Tray w="w-[58px]">
          <svg width="20" height="22" viewBox="0 0 20 22"><path d="M0 0h20v17h-7l-3 4-3-4H0z" fill="#fff" /><path d="M4 5h12M4 8.500h12M4 12h8" stroke="#1b1b1b" /></svg>
        </Tray>
      </div>
    </div>
  )
}
